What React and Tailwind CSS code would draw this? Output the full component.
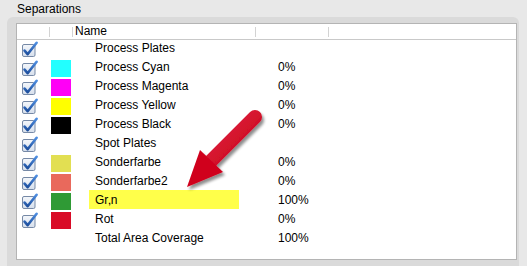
import React from "react";

const rows = [
  { name: "Process Plates", check: true, color: null, pct: "" },
  { name: "Process Cyan", check: true, color: "#22ffff", pct: "0%" },
  { name: "Process Magenta", check: true, color: "#ff00f6", pct: "0%" },
  { name: "Process Yellow", check: true, color: "#ffff00", pct: "0%" },
  { name: "Process Black", check: true, color: "#000000", pct: "0%" },
  { name: "Spot Plates", check: true, color: null, pct: "" },
  { name: "Sonderfarbe", check: true, color: "#e2df52", pct: "0%" },
  { name: "Sonderfarbe2", check: true, color: "#e9695c", pct: "0%" },
  { name: "gruen", check: true, color: "#2f9a35", pct: "100%", hl: true },
  { name: "Rot", check: true, color: "#d90b27", pct: "0%" },
  { name: "Total Area Coverage", check: false, color: null, pct: "100%" },
];

function Check() {
  return (
    <svg width="16" height="16" viewBox="0 0 16 16" className="block">
      <defs>
        <linearGradient id="cbg" x1="0" y1="0" x2="0" y2="1">
          <stop offset="0" stopColor="#f4f7fb" />
          <stop offset="1" stopColor="#d6dfec" />
        </linearGradient>
        <linearGradient id="ckg" x1="0" y1="0" x2="0" y2="1">
          <stop offset="0" stopColor="#4f8ee0" />
          <stop offset="1" stopColor="#1d4f9e" />
        </linearGradient>
      </defs>
      <rect x="0.5" y="3.5" width="12.5" height="12" rx="1.5" fill="url(#cbg)" stroke="#7689a6" />
      <path d="M2.6 9.6 L5.6 13.2 L14.6 1.8" fill="none" stroke="url(#ckg)" strokeWidth="2.6" strokeLinecap="round" strokeLinejoin="round" />
    </svg>
  );
}

export default function App() {
  return (
    <div className="relative w-[527px] h-[266px] overflow-hidden bg-[#e8e8e8] text-black font-['Liberation_Sans',Arial,sans-serif] text-[12px] leading-[14px]">
      <div className="h-[17px] pl-[17px] pt-[2px]">Separations</div>
      <div className="ml-[7px] w-[512px] h-[249px] rounded-t-[6px] bg-[#dadada] pt-[6px] pl-[9px]">
        <div className="w-[501px] h-[237px] border border-[#b4b4b4] bg-white">
          <div className="flex h-[16px] items-center border-b border-[#c9c9c9]">
            <div className="w-[32px]" />
            <div className="h-[10px] w-px bg-[#d3d3d3]" />
            <div className="w-[22px]" />
            <div className="h-[10px] w-px bg-[#d3d3d3]" />
            <div className="w-[182px] pl-[2px] h-[14px] self-start">Name</div>
            <div className="h-[10px] w-px bg-[#d3d3d3]" />
            <div className="w-[72px]" />
            <div className="h-[10px] w-px bg-[#d3d3d3]" />
          </div>
          {rows.map((r, i) => (
            <div key={i} className="relative flex h-[19px] items-start">
              {r.hl && (
                <div className="absolute left-[72px] top-[-2px] h-[19px] w-[150px] bg-[#ffff4a]" />
              )}
              <div className="w-[34px] pl-[5px] pt-px">{r.check && <Check />}</div>
              <div className="w-[20px] pt-px">
                {r.color && <div className="h-[17px] w-[20px]" style={{ backgroundColor: r.color }} />}
              </div>
              <div className="relative w-[207px] pl-[24px] pt-px whitespace-nowrap">
                {r.name === "gruen" ? (
                  <>
                    Gr<span className="text-[9px] font-bold">{"\u201a"}</span>n
                  </>
                ) : (
                  r.name
                )}
              </div>
              <div className="pt-px">{r.pct}</div>
            </div>
          ))}
        </div>
      </div>
      <svg className="absolute left-0 top-0 pointer-events-none" width="527" height="266" viewBox="0 0 527 266">
        <defs>
          <linearGradient id="arr" x1="0" y1="0" x2="1" y2="1">
            <stop offset="0" stopColor="#e5283f" />
            <stop offset="1" stopColor="#c4001b" />
          </linearGradient>
          <filter id="sh" x="-20%" y="-20%" width="150%" height="150%">
            <feGaussianBlur in="SourceAlpha" stdDeviation="1.6" />
            <feOffset dx="2" dy="3" result="b" />
            <feComponentTransfer>
              <feFuncA type="linear" slope="0.45" />
            </feComponentTransfer>
            <feMerge>
              <feMergeNode />
              <feMergeNode in="SourceGraphic" />
            </feMerge>
          </filter>
        </defs>
        <g filter="url(#sh)">
          <line x1="255" y1="117" x2="210" y2="162" stroke="url(#arr)" strokeWidth="14" strokeLinecap="round" />
          <polygon points="200,150 223,172 187,187" fill="#d0031f" />
        </g>
      </svg>
    </div>
  );
}
